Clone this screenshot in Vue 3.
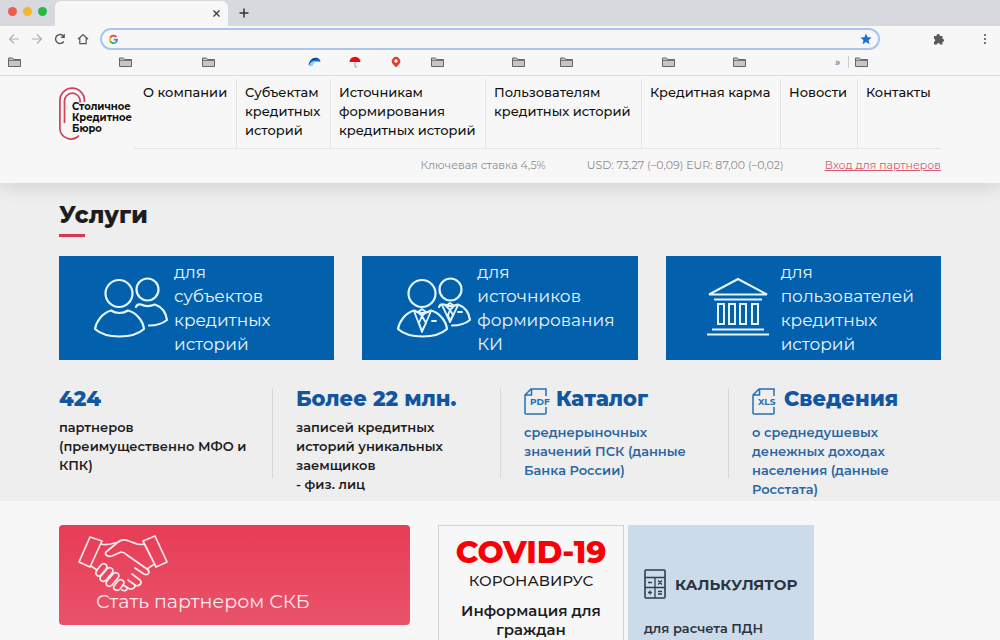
<script setup>
const folders = ['b1', 'b2', 'b3']
const moreFolders = ['b4', 'b5', 'b6', 'b7', 'b8']
const nav = [
  ['О компании'],
  ['Субъектам', 'кредитных', 'историй'],
  ['Источникам', 'формирования', 'кредитных историй'],
  ['Пользователям', 'кредитных историй'],
  ['Кредитная карма'],
  ['Новости'],
  ['Контакты'],
]
const services = [
  { icon: 'people', lines: ['для', 'субъектов', 'кредитных', 'историй'] },
  { icon: 'suits', lines: ['для', 'источников', 'формирования', 'КИ'] },
  { icon: 'bank', lines: ['для', 'пользователей', 'кредитных', 'историй'] },
]
const stats = [
  { title: '424', lines: ['партнеров', '(преимущественно МФО и', 'КПК)'] },
  { title: 'Более 22 млн.', lines: ['записей кредитных', 'историй уникальных', 'заемщиков', '- физ. лиц'] },
  { title: 'Каталог', file: 'PDF', lines: ['среднерыночных', 'значений ПСК (данные', 'Банка России)'] },
  { title: 'Сведения', file: 'XLS', lines: ['о среднедушевых', 'денежных доходах', 'населения (данные', 'Росстата)'] },
]
</script>

<template>
  <div class="window">
    <svg class="defs" aria-hidden="true">
      <symbol id="folder" viewBox="0 0 13 10">
        <path d="M.5 9.500v-8.500h4l1 1.500h7v7z" fill="#c6c6c6" stroke="#666" />
        <path d="M1 3.500h11" stroke="#777" />
      </symbol>
    </svg>

    <div class="tabs">
      <div class="lights"><i class="red"></i><i class="yellow"></i><i class="green"></i></div>
      <div class="tab">
        <button class="icon-btn" aria-label="Закрыть вкладку">
          <svg width="7" height="7" viewBox="0 0 7 7"><path d="M.5.5l6 6M6.500.5l-6 6" stroke="#333" stroke-width="1.200" /></svg>
        </button>
      </div>
      <button class="icon-btn new-tab" aria-label="Новая вкладка">
        <svg width="10" height="10" viewBox="0 0 10 10"><path d="M5 .5v9M.5 5h9" stroke="#333" stroke-width="1.500" /></svg>
      </button>
    </div>

    <div class="toolbar">
      <button class="icon-btn" aria-label="Назад">
        <svg width="12" height="12" viewBox="0 0 12 12" fill="none" stroke="#b0b0b0" stroke-width="1.200"><path d="M11 6H1.500M6 1.500L1.500 6 6 10.500" /></svg>
      </button>
      <button class="icon-btn" aria-label="Вперед">
        <svg width="12" height="12" viewBox="0 0 12 12" fill="none" stroke="#b0b0b0" stroke-width="1.200"><path d="M1 6h9.500M6 1.500L10.500 6 6 10.500" /></svg>
      </button>
      <button class="icon-btn" aria-label="Обновить">
        <svg width="12" height="12" viewBox="0 0 12 12" fill="none" stroke="#555" stroke-width="1.400"><path d="M9.800 8.500A4.500 4.500 0 1 1 9.500 3" /><path d="M10.800.5v4.500H6.500z" fill="#555" stroke="none" /></svg>
      </button>
      <button class="icon-btn" aria-label="Домой">
        <svg width="12" height="12" viewBox="0 0 12 12" fill="none" stroke="#555" stroke-width="1.200"><path d="M1 6.300L6 1.500l5 4.800M2.800 5v5.700h6.400V5" /></svg>
      </button>
      <div class="omnibox">
        <svg width="9" height="9" viewBox="0 0 18 18" fill="none" stroke-width="3.500">
          <path d="M15 4A7.200 7.200 0 0 0 2.600 5.600" stroke="#ea4335" />
          <path d="M2.600 5.600a7.200 7.200 0 0 0 0 6.800" stroke="#fbbc05" />
          <path d="M2.600 12.400a7.200 7.200 0 0 0 11 2.200" stroke="#34a853" />
          <path d="M13.600 14.600A7.200 7.200 0 0 0 16.200 9H9.500" stroke="#4285f4" />
        </svg>
        <input type="text" aria-label="Адресная строка" />
        <svg width="12" height="12" viewBox="0 0 12 12"><path d="M6 .5l1.600 3.700 4 .4-3 2.600.9 4L6 9.100l-3.500 2.100.9-4-3-2.600 4-.4z" fill="#1b6fd8" /></svg>
      </div>
      <button class="icon-btn ext" aria-label="Расширения">
        <svg width="12" height="12" viewBox="0 0 12 12"><path d="M1 3h2.600a1.700 1.700 0 1 1 3.300 0H9.500v2.700a1.600 1.600 0 1 1 0 3.200V11.500H7a1.600 1.600 0 0 0-3.200 0H1V8.800a1.600 1.600 0 0 0 0-3.100z" fill="#5a5a5a" /></svg>
      </button>
      <button class="icon-btn" aria-label="Меню">
        <svg width="4" height="12" viewBox="0 0 4 12" fill="#555"><circle cx="2" cy="2" r="1.100" /><circle cx="2" cy="6" r="1.100" /><circle cx="2" cy="10" r="1.100" /></svg>
      </button>
    </div>

    <div class="bookmarks">
      <button v-for="f in folders" :key="f" class="icon-btn" aria-label="Папка"><svg width="13" height="10"><use href="#folder" /></svg></button>
      <button class="icon-btn" aria-label="Закладка">
        <svg width="13" height="10" viewBox="0 0 13 10"><path d="M.5 8C1 3 5 .3 9 .8c2 .3 3.300 2 3.500 4.200C9 4 5.500 4.500 4 9z" fill="#1566b8" /><path d="M1 8.500C2 5 5 3.500 8 4l2 .5C7.500 4.500 5 6 4 9z" fill="#8fd3fb" /><path d="M2 4.500C4 1.500 7 .5 10 1.200 7 1.500 4.500 2.500 2 4.500z" fill="#12294c" /></svg>
      </button>
      <button class="icon-btn" aria-label="Закладка">
        <svg width="12" height="12" viewBox="0 0 12 12"><path d="M.5 6a5.500 5.300 0 0 1 11 0z" fill="#e60b12" /><path d="M6 6v4.200a1 1 0 0 0 2 0" fill="none" stroke="#999" /></svg>
      </button>
      <button class="icon-btn" aria-label="Закладка">
        <svg width="10" height="12" viewBox="0 0 10 12"><path d="M5 11.500L1.800 8A4.200 4.200 0 1 1 8.200 8z" fill="#e13c30" /><circle cx="5" cy="5" r="1.700" fill="#fff" /></svg>
      </button>
      <button v-for="f in moreFolders" :key="f" class="icon-btn" aria-label="Папка"><svg width="13" height="10"><use href="#folder" /></svg></button>
      <button class="icon-btn more" aria-label="Другие закладки">»</button>
      <i class="sep"></i>
      <button class="icon-btn" aria-label="Папка"><svg width="13" height="10"><use href="#folder" /></svg></button>
    </div>

    <main class="page">
      <header class="header">
        <a href="#" class="logo">
          <svg width="30" height="54" viewBox="0 0 30 54" fill="none" stroke="#d2405b" stroke-width="1.700">
            <path d="M25.500 15v-1.500a12.300 12.300 0 0 0-24.600 0v28a11 11 0 0 0 19 7" />
            <path d="M5.500 36V14a7.800 7.800 0 0 1 15.600 0v1.500" />
          </svg>
          <span>Столичное<br />Кредитное<br />Бюро</span>
        </a>
        <div class="menu">
          <nav class="nav">
            <a v-for="item in nav" :key="item.join()" href="#"><span v-for="l in item" :key="l">{{ l }}</span></a>
          </nav>
          <div class="rates">
            <span>Ключевая ставка 4,5%</span>
            <span>USD: 73,27 (–0,09) EUR: 87,00 (–0,02)</span>
            <a href="#">Вход для партнеров</a>
          </div>
        </div>
      </header>

      <section class="services">
        <h1>Услуги</h1>
        <div class="cards">
          <a v-for="s in services" :key="s.icon" href="#" class="card">
            <svg v-if="s.icon === 'bank'" width="74" height="62" viewBox="0 0 74 62" fill="none" stroke="#e3f6ff" stroke-width="2">
              <path d="M8 17.500L37 2l29 15.500zM13 22.500h48M11 52.500h52M6 57.500h62" />
              <path d="M17 27h6v20h-6zM28 27h6v20h-6zM39 27h6v20h-6zM51 27h6v20h-6z" />
            </svg>
            <svg v-else width="74" height="62" viewBox="0 0 74 62" fill="none" stroke="#e3f6ff" stroke-width="2.200" stroke-linecap="round" stroke-linejoin="round">
              <circle cx="25" cy="16.500" r="13.500" />
              <circle cx="53.500" cy="12.500" r="11" />
              <path d="M17 33.500C8 36 2 45 1 52c11 10 38 10 49 0-1-8-7-16-16-18.500-5 3.300-12 3.300-17 0z" />
              <path d="M42 30c1-3 3-3 5-2.500 4 2 9 2 14 0C68 30 72 36 73 43c-5 4-11 5.500-18 5.500" />
              <g v-if="s.icon === 'suits'" stroke-width="1.800">
                <path d="M17 34l8 21 9-21M21 35l4-3 4 3-4 4zM25 39l-3 7 3 8 4-8zM35 44h4" />
                <path d="M45 28l8 17 8-17M49 29l4-3 4 3-4 4zM53 33l-2 5 2 6 3-6zM61 35h4" />
              </g>
            </svg>
            <span><span v-for="l in s.lines" :key="l" class="line">{{ l }}</span></span>
          </a>
        </div>

        <div class="stats">
          <div v-for="s in stats" :key="s.title" class="stat" :class="{ linked: s.file }">
            <h2>
              <svg v-if="s.file" width="27" height="27" viewBox="0 0 27 27" fill="none" stroke="#2470b5" stroke-width="1.500">
                <path d="M22 8V1H7L1 7v18q0 1 1 1h19q1 0 1-1v-6M7.500 1v6H1" />
                <text x="6" y="17" fill="#2470b5" stroke="none">{{ s.file }}</text>
              </svg>
              <a v-if="s.file" href="#">{{ s.title }}</a>
              <template v-else>{{ s.title }}</template>
            </h2>
            <p><span v-for="l in s.lines" :key="l" class="line">{{ l }}</span></p>
          </div>
        </div>
      </section>

      <section class="promos">
        <a href="#" class="partner">
          <svg width="90" height="58" viewBox="0 0 90 58" fill="none" stroke="#fde8ec" stroke-width="1.700" stroke-linecap="round" stroke-linejoin="round">
            <path d="M12 3l12 4-12 26L1 28zM65 7l12-5 12 26-11 5z" />
            <path d="M23 10c7 2 12-1 18-2M66 10c-5 2-9-1-15-3-5-2-9-1-12 2l-11 9c-2 3 2 5 6 4l9-4c2 0 4 1 6 3l20 14c4 3 1 7-3 5l-9-6M75 31l-6 4M13 32l6 4" />
            <path d="M19 36l4-5c3-3 8 0 5 4l-5 6c-3 3-7-1-4-5zM23 42l6-7c3-3 8 0 5 4l-6 7c-3 3-8 0-5-4zM29 47l6-7c3-3 8 0 5 4l-6 7c-3 3-8 0-5-4zM36 52l4-5c3-3 8 0 5 4l-3 4c-3 3-8 0-6-3z" />
            <path d="M54 40l8 6c3 4-2 7-5 5l-7-5M57 51c0 4-4 5-7 3l-5-3M49 55c-1 2-3 2-5 1" />
          </svg>
          <span>Стать партнером СКБ</span>
        </a>
        <a href="#" class="covid">
          <strong>COVID-19</strong>
          <span class="virus">КОРОНАВИРУС</span>
          <b>Информация для граждан</b>
        </a>
        <a href="#" class="calc">
          <span class="calc-title">
            <svg width="22" height="30" viewBox="0 0 22 30" fill="none" stroke="#2c3e50" stroke-width="1.600">
              <rect x="1" y="1" width="20" height="28" rx="1" />
              <path d="M1 8.500h20M1 18.500h20M11 8.500V29M4 13.500h4M4 23.500h4M6 21.500v4M14 11.500l4 4M18 11.500l-4 4M14 22.500h4M14 25h4" stroke-width="1.300" />
            </svg>
            КАЛЬКУЛЯТОР
          </span>
          <span>для расчета ПДН</span>
        </a>
      </section>
    </main>
  </div>
</template>

<style>
body { margin: 0; }
</style>

<style scoped>
.window {
  height: 100vh;
  overflow: hidden;
  background: #f7f7f7;
  color: #1d1d1f;
  font-family: Montserrat, Inter, "Open Sans", sans-serif;
  font-size: 13px;
  line-height: 19px;
}
.window *, .window { box-sizing: border-box; }
.defs { position: absolute; width: 0; height: 0; }
a { color: inherit; text-decoration: none; }
svg { flex: none; display: block; overflow: visible; }
.line { display: block; white-space: nowrap; }
.icon-btn {
  display: flex;
  align-items: center;
  padding: 0;
  border: 0;
  background: none;
  font: inherit;
}

.tabs { display: flex; height: 26px; background: #d7d9de; }
.lights { display: flex; gap: 6px; width: 55px; padding: 7px 0 0 8px; }
.lights i { width: 9px; height: 9px; border-radius: 50%; }
.red { background: #f15b50; }
.yellow { background: #f5b52e; }
.green { background: #28b845; }
.tab {
  display: flex;
  justify-content: flex-end;
  width: 173px;
  margin-top: 1px;
  padding-right: 8px;
  border-radius: 6px 6px 0 0;
  background: #f7f7f7;
}
.new-tab { margin-left: 11px; }
.toolbar { display: flex; align-items: center; gap: 11px; height: 26px; padding: 0 13px 0 8px; }
.omnibox {
  display: flex;
  align-items: center;
  flex: 1;
  height: 22px;
  padding: 0 6px 0 7px;
  border: 2px solid #a9c4ee;
  border-radius: 11px;
}
.omnibox input { flex: 1; min-width: 0; border: 0; outline: 0; background: none; }
.ext { margin: 0 27px 0 42px; }
.bookmarks {
  display: grid;
  grid-template-columns: 111fr 83fr 106fr 41fr 42fr 40fr 81fr 48fr 102fr 71fr 102fr 13fr 7fr 145fr;
  align-items: center;
  height: 24px;
  padding-left: 8px;
  padding-bottom: 3px;
  border-bottom: 1px solid #dcdcdc;
}
.more { color: #444; font-size: 11px; }
.sep { width: 1px; height: 12px; background: #ccc; }

.page { overflow: hidden; }
.header {
  position: relative;
  display: flex;
  height: 107px;
  padding: 3px 59px 0;
  box-shadow: 0 4px 18px rgba(0, 0, 0, 0.12);
  background: #f7f7f7;
}
.logo {
  display: flex;
  width: 75px;
  padding-top: 8px;
  color: #111;
  font-size: 10px;
  font-weight: 700;
  line-height: 11px;
}
.logo span { margin: 14px 0 0 -17px; }
.menu { flex: 1; }
.nav {
  display: grid;
  grid-template-columns: 102fr 94fr 155fr 156fr 139fr 77fr 84fr;
  height: 70px;
  border-bottom: 1px solid #e4e4e4;
  color: #111;
  font-weight: 500;
}
.nav a { padding: 4px 0 0 9px; white-space: nowrap; }
.nav a + a { padding-left: 8px; border-left: 1px solid #e4e4e4; }
.nav span { display: block; }
.rates {
  display: flex;
  justify-content: flex-end;
  gap: 41px;
  padding-top: 7px;
  color: #8e8e8e;
  font-size: 11px;
}
.rates a { color: #d9596e; text-decoration: underline; }

.services { padding: 18px 59px 3px; background: #eee; }
h1 {
  margin: 0;
  font-size: 23px;
  font-weight: 800;
  line-height: 28px;
}
h1::after {
  content: "";
  display: block;
  width: 26px;
  height: 3px;
  margin-top: 5px;
  background: #d93652;
}
.cards { display: grid; grid-template-columns: repeat(3, 1fr); gap: 28px; margin-top: 19px; }
.card {
  display: flex;
  align-items: center;
  gap: 6px;
  height: 104px;
  padding-left: 35px;
  background: #0360ac;
  color: #e8f7ff;
  font-size: 17px;
  line-height: 24px;
}
.stats {
  display: grid;
  grid-template-columns: 213fr 228fr 228fr 213fr;
  margin-top: 28px;
}
.stat { position: relative; height: 110px; }
.stat + .stat { padding-left: 24px; }
.stat + .stat::before {
  content: "";
  position: absolute;
  left: 0;
  top: 0;
  width: 1px;
  height: 90px;
  background: #d6d6d6;
}
h2 {
  display: flex;
  gap: 5px;
  margin: 0 0 8px;
  color: #11569f;
  font-size: 21px;
  font-weight: 800;
  line-height: 22px;
}
h2 text { font-size: 9px; font-weight: 700; }
p { margin: 0; font-weight: 600; }
.linked p { color: #2b66a3; }

.promos {
  display: grid;
  grid-template-columns: 379fr 190fr 186fr 127fr;
  align-items: start;
  padding: 24px 59px 0;
}
.partner {
  height: 100px;
  margin-right: 28px;
  padding: 9px 19px;
  border-radius: 4px;
  background: linear-gradient(#e73c56, #e9536a);
  color: #fde8ec;
  font-size: 19px;
}
.partner span { display: block; padding-left: 18px; }
.covid, .calc { height: 150px; }
.covid {
  margin-right: 4px;
  padding: 7px 12px;
  border: 1px solid #d2d2d2;
  text-align: center;
  color: #1d1d1f;
  font-size: 15px;
}
.covid strong { display: block; color: #f90006; font-size: 31px; font-weight: 800; line-height: 38px; }
.covid b { display: block; margin-top: 11px; font-weight: 600; }
.virus { display: block; font-weight: 500; }
.calc {
  padding: 44px 16px;
  background: #cbdbe9;
  color: #2b3440;
  font-weight: 600;
}
.calc-title { display: flex; align-items: center; gap: 9px; margin-bottom: 20px; font-size: 15px; font-weight: 700; }
.calc > span:last-child { display: block; }
</style>
